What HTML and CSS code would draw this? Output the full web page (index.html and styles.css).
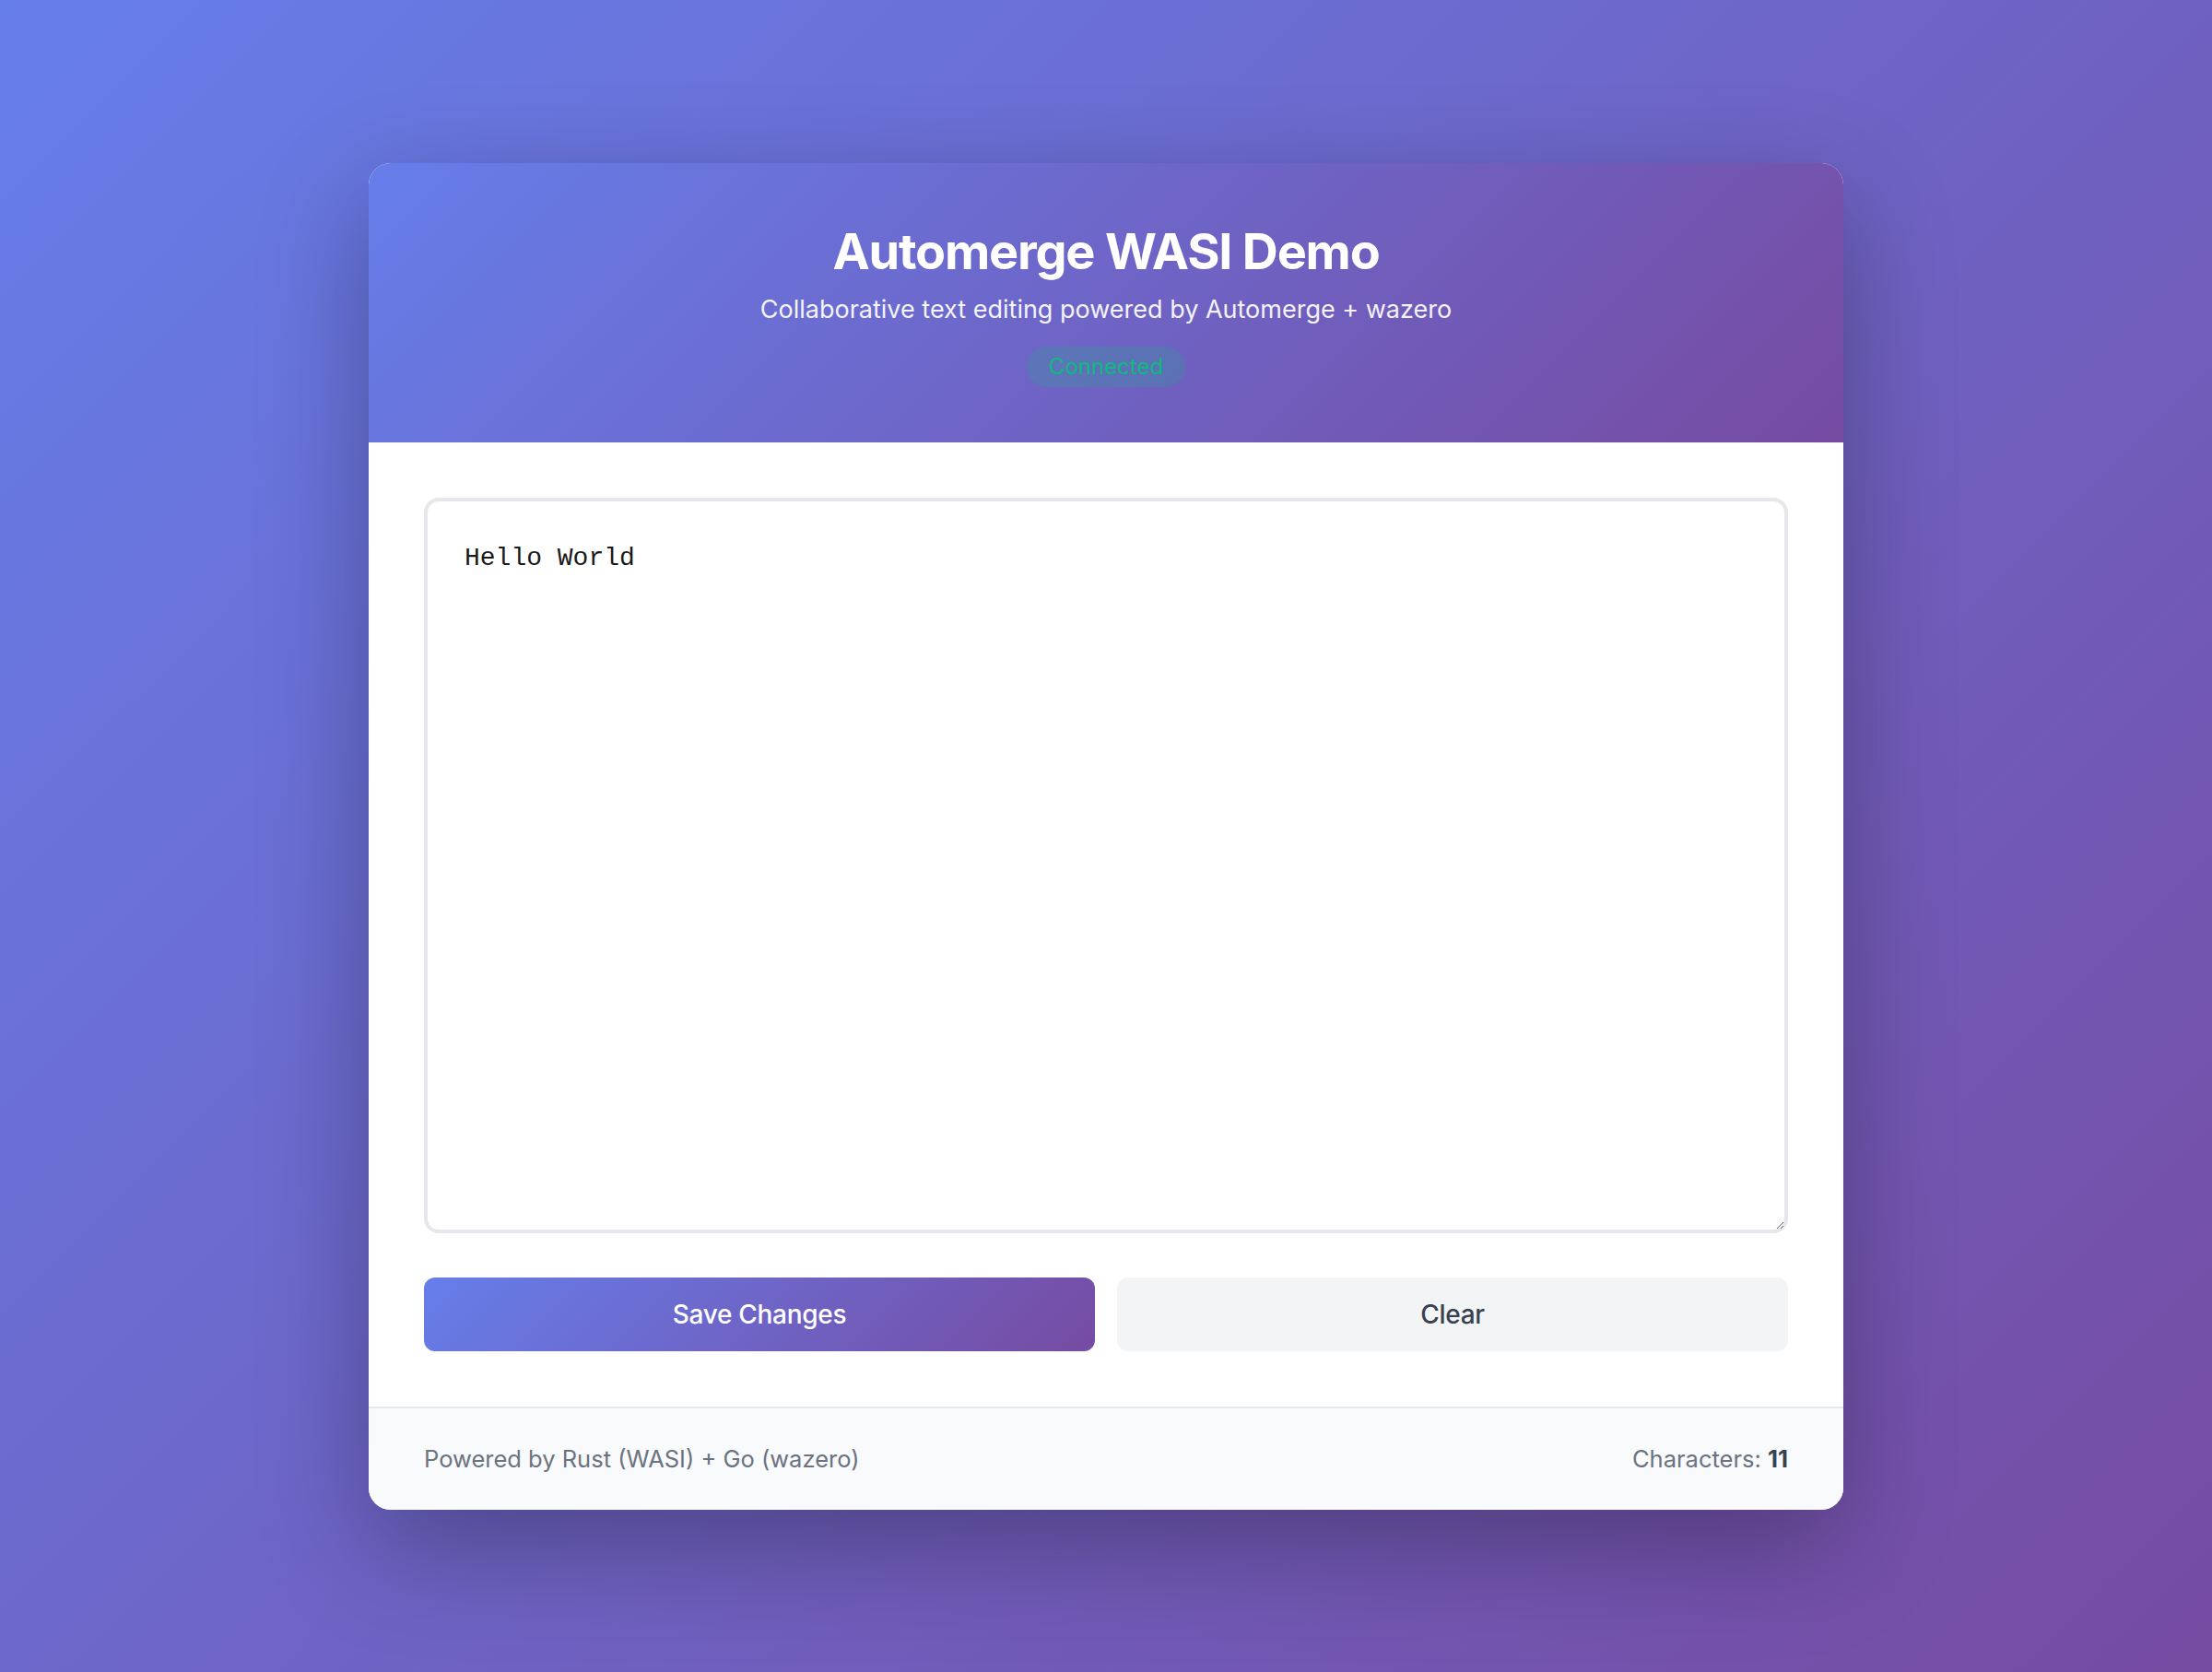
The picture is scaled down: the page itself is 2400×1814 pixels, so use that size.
FILE: index.html
```html
<!DOCTYPE html>
<html lang="en">
<head>
<meta charset="utf-8">
<title>Automerge WASI Demo</title>
<link rel="stylesheet" href="styles.css">
</head>
<body>
<div class="page">
  <div class="card">
    <header class="header">
      <h1 class="title">Automerge WASI Demo</h1>
      <p class="subtitle">Collaborative text editing powered by Automerge + wazero</p>
      <span class="status">Connected</span>
    </header>
    <main class="body">
      <textarea class="editor" spellcheck="false">Hello World</textarea>
      <div class="actions">
        <button class="btn btn-primary">Save Changes</button>
        <button class="btn btn-secondary">Clear</button>
      </div>
    </main>
    <footer class="footer">
      <span>Powered by Rust (WASI) + Go (wazero)</span>
      <span>Characters: <strong class="count">11</strong></span>
    </footer>
  </div>
</div>
</body>
</html>
```

FILE: styles.css
```css
* { box-sizing: border-box; }
html, body { margin: 0; padding: 0; }
body {
  font-family: Inter, "Liberation Sans", sans-serif;
  background: linear-gradient(135deg, #667eea 0%, #764ba2 100%);
  min-height: 100vh;
}
.page {
  min-height: 100vh;
  display: flex;
  align-items: center;
  justify-content: center;
}
.card {
  width: 1600px;
  background: #fff;
  border-radius: 24px;
  overflow: hidden;
  box-shadow: 0 40px 120px rgba(0, 0, 0, 0.3);
}
.header {
  background: linear-gradient(135deg, #667eea 0%, #764ba2 100%);
  color: #fff;
  text-align: center;
  padding: 62px 40px 60px;
  display: flex;
  flex-direction: column;
  align-items: center;
}
.title {
  margin: 0;
  font-size: 54px;
  line-height: 67px;
  font-weight: 700;
  letter-spacing: -1.2px;
}
.subtitle {
  margin: 10px 0 20px;
  font-size: 27px;
  line-height: 40px;
  opacity: 0.92;
}
.status {
  display: inline-block;
  padding: 8px 24px;
  font-size: 24px;
  line-height: 28px;
  border-radius: 999px;
  background: rgba(16, 185, 129, 0.2);
  color: #10b981;
}
.body {
  padding: 60px;
  display: flex;
  flex-direction: column;
  gap: 48px;
}
.editor {
  display: block;
  width: 100%;
  height: 798px;
  border: 4px solid #e5e7eb;
  border-radius: 16px;
  padding: 40px;
  font-family: "Liberation Mono", "Courier New", monospace;
  font-size: 28px;
  line-height: 1.6;
  color: #1a1a1a;
  resize: vertical;
  outline: none;
}
.actions {
  display: flex;
  gap: 24px;
}
.btn {
  flex: 1;
  height: 80px;
  border: none;
  border-radius: 12px;
  font-family: Inter, "Liberation Sans", sans-serif;
  font-size: 28px;
  letter-spacing: -0.3px;
  font-weight: 500;
}
.btn-primary {
  background: linear-gradient(135deg, #667eea 0%, #764ba2 100%);
  color: #fff;
}
.btn-secondary {
  background: #f3f4f6;
  color: #374151;
}
.footer {
  display: flex;
  justify-content: space-between;
  align-items: center;
  padding: 40px 60px;
  border-top: 2px solid #e5e7eb;
  background: #f9fafb;
  color: #6b7280;
  font-size: 25.5px;
  line-height: 30px;
}
.count {
  color: #374151;
  font-weight: 700;
}
```
